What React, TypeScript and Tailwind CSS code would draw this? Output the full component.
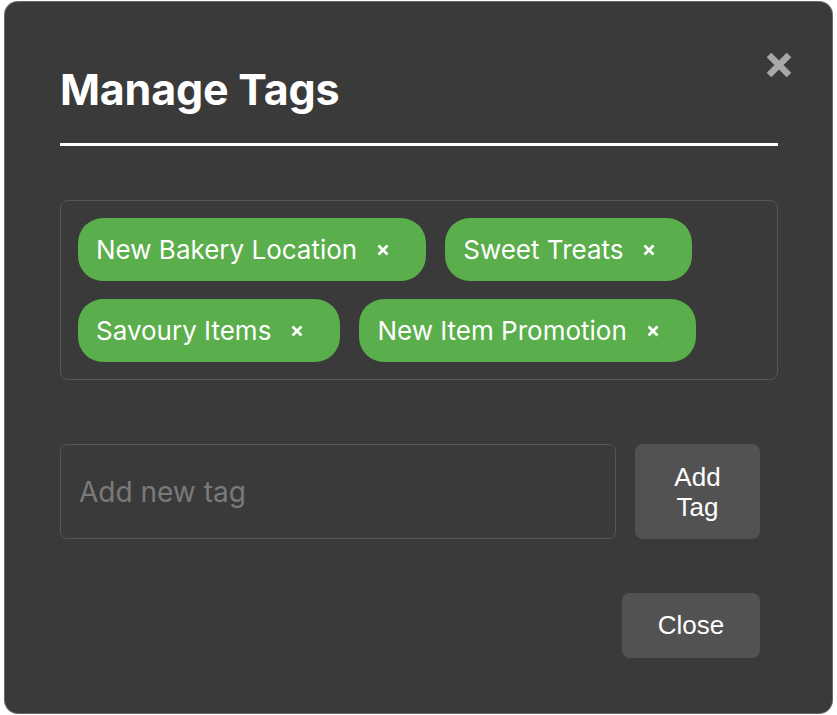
import React from "react";

const tags = ["New Bakery Location", "Sweet Treats", "Savoury Items", "New Item Promotion"];

function SmallX() {
  return (
    <svg width="12" height="12" viewBox="0 0 12 12" className="shrink-0">
      <path d="M1.5 1.5 L10.5 10.5 M10.5 1.5 L1.5 10.5" stroke="white" strokeWidth="2.7" fill="none" />
    </svg>
  );
}

export default function App() {
  return (
    <div className="min-h-[715px] w-[837px] bg-white pt-[1px] pl-[4px]" style={{ fontFamily: "Inter, 'Noto Sans', sans-serif" }}>
      <div className="relative w-[829px] h-[713px] rounded-[14px] bg-[#3a3a3a] border border-[#8a8a8a]/60 pl-[55px] pr-[54px] pt-[61px]">
        <button className="absolute right-[39px] top-[49px] w-[28px] h-[28px] flex items-center justify-center">
          <svg width="28" height="28" viewBox="0 0 28 28">
            <path d="M4 4 L24 24 M24 4 L4 24" stroke="#a8a8a8" strokeWidth="6.5" fill="none" />
          </svg>
        </button>
        <h2 className="text-[43px] leading-[52px] font-bold text-white pb-[28px] border-b-[3px] border-white tracking-[-0.2px]">
          Manage Tags
        </h2>
        <div className="mt-[54px] border border-[#555555] rounded-[8px] p-[17px] flex flex-wrap gap-x-[19px] gap-y-[18px]">
          {tags.map((t) => (
            <div key={t} className="h-[63px] rounded-[25px] bg-[#5aae4b] flex items-center pl-[18px] pr-[37px] text-white text-[26px]">
              <span>{t}</span>
              <span className="ml-[20px] flex items-center">
                <SmallX />
              </span>
            </div>
          ))}
        </div>
        <div className="mt-[64px] flex gap-[19px] pr-[18px]">
          <div className="flex-1 h-[95px] rounded-[7px] border border-[#555555] flex items-center pl-[18px] text-[28px] text-[#7a7a7a]">
            Add new tag
          </div>
          <button
            className="w-[125px] h-[95px] rounded-[8px] bg-[#525252] text-white text-[26px] leading-[30px] flex flex-col items-center justify-center"
            style={{ fontFamily: "'Liberation Sans', Arial, sans-serif" }}
          >
            <span>Add</span>
            <span>Tag</span>
          </button>
        </div>
        <div className="mt-[54px] flex justify-end pr-[18px]">
          <button
            className="w-[138px] h-[65px] rounded-[8px] bg-[#525252] text-white text-[26px] flex items-center justify-center"
            style={{ fontFamily: "'Liberation Sans', Arial, sans-serif" }}
          >
            Close
          </button>
        </div>
      </div>
    </div>
  );
}
